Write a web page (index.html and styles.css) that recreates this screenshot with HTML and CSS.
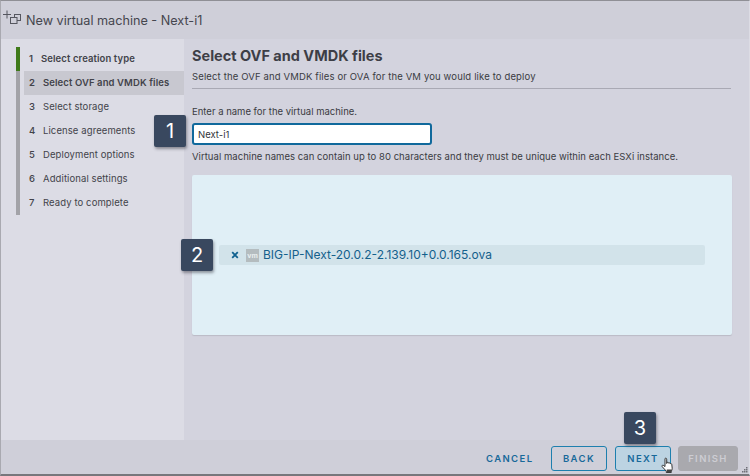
FILE: index.html
```html
<!DOCTYPE html>
<html lang="en">
<head>
<meta charset="utf-8">
<title>New virtual machine - Next-i1</title>
<link rel="stylesheet" href="styles.css">
</head>
<body>
<div class="dialog">
	<div class="head">
		<svg class="head-icon" width="25" height="22" viewBox="0 0 25 22" fill="none" stroke="#55565f" stroke-width="1">
			<path d="M2 5.500h8M6 1.500v8"/>
			<rect x="13.500" y="5.500" width="6" height="6"/>
			<rect x="9.500" y="8.500" width="6.500" height="6" fill="#cfcfd9"/>
		</svg>
		<span class="head-title">New virtual machine - Next-i1</span>
	</div>
	<div class="body">
		<div class="side">
			<ul class="steps">
				<li class="done"><b>1</b><span>Select creation type</span></li>
				<li class="cur"><b>2</b><span>Select OVF and VMDK files</span></li>
				<li><b>3</b><span>Select storage</span></li>
				<li><b>4</b><span>License agreements</span></li>
				<li><b>5</b><span>Deployment options</span></li>
				<li><b>6</b><span>Additional settings</span></li>
				<li><b>7</b><span>Ready to complete</span></li>
			</ul>
		</div>
		<div class="main">
			<h2>Select OVF and VMDK files</h2>
			<p class="sub">Select the OVF and VMDK files or OVA for the VM you would like to deploy</p>
			<p class="label">Enter a name for the virtual machine.</p>
			<input type="text" class="name" value="Next-i1">
			<p class="help">Virtual machine names can contain up to 80 characters and they must be unique within each ESXi instance.</p>
			<div class="files">
				<div class="file">
					<svg class="x" width="8" height="8" viewBox="0 0 8 8"><path d="M1.200 1.200l5.600 5.600M6.800 1.200l-5.600 5.600" stroke="#10618f" stroke-width="1.800" fill="none"/></svg>
					<span class="vm">vm</span>
					<span class="fname">BIG-IP-Next-20.0.2-2.139.10+0.0.165.ova</span>
				</div>
			</div>
		</div>
	</div>
	<div class="foot">
		<button class="btn flat">CANCEL</button>
		<button class="btn">BACK</button>
		<button class="btn hover">NEXT</button>
		<button class="btn off">FINISH</button>
	</div>
	<div class="tag tag1">1</div>
	<div class="tag tag2">2</div>
	<div class="tag tag3">3</div>
	<svg class="hand" width="14" height="17" viewBox="0 0 14 17">
		<path d="M4 1.500c.8-.7 1.700-.2 1.700.7v4.300l.3-1c.8-.5 1.500-.2 1.600.6.800-.5 1.500-.2 1.600.6.800-.4 1.500 0 1.600.8l.4 3.800c0 1.300-.4 2.200-1 3v1.200H5.300v-1.400L1.300 9.800c-.6-.8-.2-1.600.6-1.600.6 0 1.200.5 2.100 1.400z" fill="#fff" stroke="#222" stroke-width=".9"/>
		<rect x="5.800" y="12.500" width="4.600" height="3" fill="#444"/>
	</svg>
	<svg class="grip" width="8" height="8" viewBox="0 0 8 8" fill="#6f7078">
		<rect x="5" y="1" width="1.500" height="1.500"/><rect x="3" y="3" width="1.500" height="1.500"/><rect x="5" y="3" width="1.500" height="1.500"/><rect x="1" y="5" width="1.500" height="1.500"/><rect x="3" y="5" width="1.500" height="1.500"/><rect x="5" y="5" width="1.500" height="1.500"/>
	</svg>
</div>
</body>
</html>
```

FILE: styles.css
```css
html,body{margin:0;padding:0;}
body{width:750px;height:476px;overflow:hidden;font-family:"Inter","Liberation Sans",sans-serif;color:#3a3b42;}
h2,p,ul,li{margin:0;padding:0;}
ul{list-style:none;}

.dialog{position:relative;width:750px;height:476px;box-sizing:border-box;display:flex;flex-direction:column;background:#d3d3de;border-top:1px solid #8f8f95;border-left:1px solid #a9a9b0;border-right:1px solid #dcdce4;border-bottom:2px solid #77777c;}

.head{height:38px;flex:none;display:flex;align-items:center;background:#cfcfd9;}
.head-icon{flex:none;}
.head-title{font-size:12.650px;color:#45464e;}

.body{flex:1;display:flex;min-height:0;}
.side{width:183px;flex:none;background:#dcdce5;padding-top:8px;box-sizing:border-box;}
.steps{margin-left:15px;width:168px;}
.steps li{height:24px;display:flex;align-items:center;font-size:9.500px;border-left:4px solid #a3a3a8;padding:0 0 2px 9px;box-sizing:border-box;color:#42434a;letter-spacing:.1px;}
.steps b{width:14px;flex:none;font-weight:500;}
.steps .done{border-left-color:#3f7a1a;font-weight:600;}
.steps .done b{width:12px;font-weight:600;}
.steps .cur{font-weight:600;background:linear-gradient(to right,#dcdce5 4px,#c8c8d0 4px);}
.steps .cur b{font-weight:600;}

.main{flex:1;min-width:0;padding:8px 17px 0 8px;}
h2{font-size:14.500px;line-height:17px;font-weight:700;color:#3d3e46;}
.sub{font-size:9.500px;line-height:14px;margin-top:6px;padding-bottom:4px;border-bottom:1px solid #a9a9b4;margin-right:1px;letter-spacing:.14px;}
.label{font-size:9.500px;line-height:14px;margin-top:16px;}
.name{display:block;width:240px;height:22px;box-sizing:border-box;margin-top:4px;padding:0 4px;border:2px solid #10699c;border-radius:3px;background:#fff;font:400 9.500px "Inter","Liberation Sans",sans-serif;color:#33343a;outline:none;}
.help{font-size:9.500px;line-height:14px;margin-top:5px;white-space:nowrap;letter-spacing:.04px;}
.files{margin-top:11px;height:160px;background:#e0eff6;display:flex;align-items:center;justify-content:center;border-radius:2px;box-shadow:0 1px 1px #bbbbc6;}
.file{width:486px;height:20px;background:#d2e3ea;border-radius:2px;display:flex;align-items:center;}
.x{margin-left:12px;flex:none;}
.vm{width:13px;height:13px;margin-left:7px;flex:none;background:#b4bcbf;color:#e8eeef;font-size:7px;font-weight:700;text-align:center;line-height:13px;overflow:hidden;}
.fname{margin-left:4px;padding-bottom:2px;font-size:12px;color:#14608c;white-space:nowrap;}

.foot{height:34px;flex:none;box-sizing:border-box;display:flex;justify-content:flex-end;align-items:flex-start;gap:8px;padding:6px 11px 0 0;background:#cfcfd9;}
.btn{height:25px;box-sizing:border-box;padding:0;border:1px solid #1d7fae;border-radius:3px;background:transparent;color:#17699a;font:600 9.500px "Inter","Liberation Sans",sans-serif;letter-spacing:1.400px;width:56px;}
.flat{border:0;width:46px;margin-right:11px;}
.hover{background:#bcd3e2;}
.off{width:60px;margin-left:-1px;border-color:#a9a9ae;background:#a9a9ae;color:#cdcdd3;}

.tag{position:absolute;width:32px;height:32px;background:#39485f;color:#fff;font-size:20px;display:flex;align-items:center;justify-content:center;border-radius:2px;box-shadow:1px 2px 3px rgba(40,40,50,.45);}
.tag1{left:153px;top:114px;}
.tag2{left:180px;top:238px;}
.tag3{left:623px;top:411px;}
.hand{position:absolute;left:660px;top:456px;}
.grip{position:absolute;right:0;bottom:0;}
```
